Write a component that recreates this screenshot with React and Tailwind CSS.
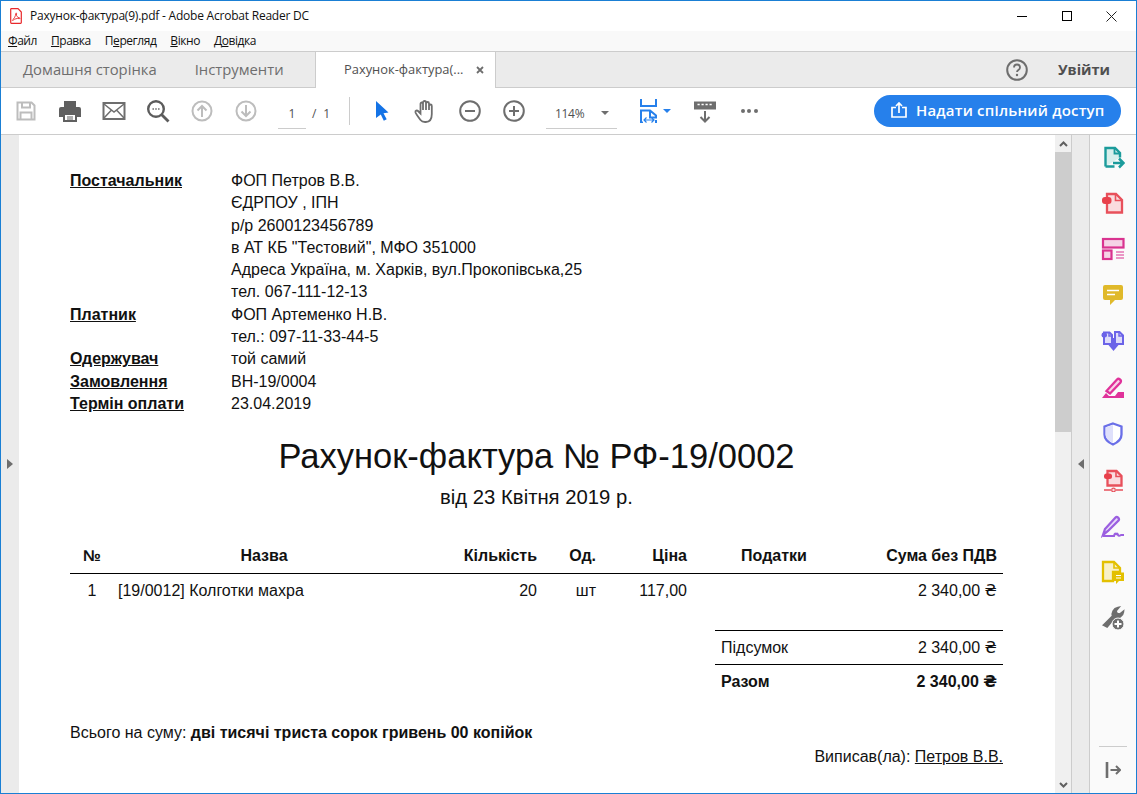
import React from "react";

const Cell = ({ w = "w-[44px]", children }) => (
  <div className={`${w} h-[24px] flex items-center justify-center shrink-0`}>{children}</div>
);

const Svg = ({ s = 24, children, cls = "" }) => (
  <svg width={s} height={s} viewBox="0 0 24 24" fill="none" className={cls}>{children}</svg>
);

const PdfIcon = () => (
  <svg width="12" height="16" viewBox="0 0 12 16" fill="none">
    <path d="M1 .7h7l3.3 3.300v10.600a.7.7 0 0 1-.7.7H1.400a.7.7 0 0 1-.7-.7V1.400A.7.7 0 0 1 1 .7z" fill="#fff" stroke="#e8282b" strokeWidth="1.200" />
    <path d="M2.600 11.800c1.600-1 3-3.800 3.200-6.300.2-1 .9-.6.7.3-.5 2 .9 3.800 3 4 .9.2.6 1-.3.8-2.300-.3-4.300.1-6 1.600-.7.500-1.200.100-.6-.4z" stroke="#e8282b" strokeWidth=".9" />
  </svg>
);

const Toolbar = () => (
  <div className="h-[47px] flex items-center bg-white border-b border-[#cccccc] pl-[3px] shrink-0">
    <Cell>
      <Svg>
        <path d="M3.500 3.500h14l3 3v14h-17z" stroke="#bdbdbd" strokeWidth="2" />
        <path d="M8 3.500v5h8v-5M6.500 20.500v-7h11v7" stroke="#bdbdbd" strokeWidth="2" />
      </Svg>
    </Cell>
    <Cell>
      <Svg>
        <path d="M6 2h12v6H6z" fill="#606060" />
        <path d="M1 10a2 2 0 0 1 2-2h18a2 2 0 0 1 2 2v8h-4v-4H5v4H1z" fill="#606060" />
        <path d="M6 15h12v7H6z" fill="#fff" stroke="#606060" strokeWidth="2" />
        <path d="M9 18h6M9 20h6" stroke="#606060" strokeWidth="1" />
      </Svg>
    </Cell>
    <Cell>
      <Svg>
        <rect x="1.500" y="4" width="21" height="16" stroke="#6e6e6e" strokeWidth="2" />
        <path d="M2 5l10 8 10-8M2 19l7.500-8M22 19l-7.500-8" stroke="#6e6e6e" strokeWidth="1.500" />
      </Svg>
    </Cell>
    <Cell>
      <Svg>
        <circle cx="10" cy="10" r="7.800" stroke="#5c5c5c" strokeWidth="2.400" />
        <path d="M15.500 15.500l7 7" stroke="#5c5c5c" strokeWidth="2.800" />
        <path d="M6.500 10h1.400M9.300 10h1.400M12.100 10h1.400" stroke="#5c5c5c" strokeWidth="1.600" />
      </Svg>
    </Cell>
    <Cell>
      <Svg>
        <circle cx="12" cy="12" r="9.500" stroke="#bdbdbd" strokeWidth="2" />
        <path d="M12 18V7M7.500 11.500L12 7l4.500 4.500" stroke="#bdbdbd" strokeWidth="2" />
      </Svg>
    </Cell>
    <Cell>
      <Svg>
        <circle cx="12" cy="12" r="9.500" stroke="#bdbdbd" strokeWidth="2" />
        <path d="M12 6v11M7.500 12.500L12 17l4.500-4.500" stroke="#bdbdbd" strokeWidth="2" />
      </Svg>
    </Cell>
    <div className="ml-[10px] w-[28px] h-[28px] flex items-center justify-center border-b border-[#cccccc] mt-[8px] text-[12px] text-[#505050] pb-[2px]">1</div>
    <div className="ml-[6px] w-[18px] mt-[6px] text-[12px] text-[#505050] whitespace-nowrap flex justify-between"><span>/</span><span>1</span></div>
    <div className="ml-[19px] mr-[10px] w-px h-[28px] bg-[#cccccc]" />
    <Cell>
      <svg width="14" height="20" viewBox="0 0 14 20"><path d="M1 0l12.500 11.500-5 .8 3.200 6-2.900 1.500-3-6.300L1 17z" fill="#1473e6" /></svg>
    </Cell>
    <Cell>
      <Svg>
        <path d="M6.500 21c-1.500-2-4.500-6-5-7.500-.5-2 1.500-2.500 2.500-1.500l2.500 2.500V5c0-2 2.500-2 2.500 0v6V3.500c0-2 3-2 3 0V11 4.500c0-2 3-2 3 0V11 7c0-2 2.800-2 2.800 0v8c0 4.500-2 8-6 8H11c-2 0-3.500-.7-4.500-2z" stroke="#6e6e6e" strokeWidth="1.800" />
      </Svg>
    </Cell>
    <Cell>
      <Svg>
        <circle cx="12" cy="12" r="9.800" stroke="#6e6e6e" strokeWidth="2" />
        <path d="M7 12h10" stroke="#6e6e6e" strokeWidth="2" />
      </Svg>
    </Cell>
    <Cell>
      <Svg>
        <circle cx="12" cy="12" r="9.800" stroke="#6e6e6e" strokeWidth="2" />
        <path d="M7 12h10M12 7v10" stroke="#6e6e6e" strokeWidth="2" />
      </Svg>
    </Cell>
    <div className="ml-[10px] w-[71px] h-[28px] mt-[8px] border-b border-[#cccccc] flex items-center pl-[9px] pb-[2px] text-[12px] tracking-[-0.300px] text-[#505050] relative">
      114%
      <span className="absolute right-[8px] top-[10px] w-0 h-0 border-l-[4px] border-r-[4px] border-t-[4px] border-l-transparent border-r-transparent border-t-[#6e6e6e]" />
    </div>
    <div className="ml-[23px] w-[18px] h-[24px] shrink-0">
      <svg width="18" height="24" viewBox="0 0 18 24" fill="none">
        <path d="M1 0v7h15V0" stroke="#2680eb" strokeWidth="2" />
        <path d="M1 24V11.500h9l6 5v2h-6v-6M16 21v3M1 23.500h2" stroke="#2680eb" strokeWidth="2" />
        <path d="M4 21h10M6.500 18.500L4 21l2.500 2.500M11.500 18.500L14 21l-2.500 2.500" stroke="#2680eb" strokeWidth="1.200" />
      </svg>
    </div>
    <span className="ml-[5px] w-0 h-0 border-l-[4px] border-r-[4px] border-t-[4px] border-l-transparent border-r-transparent border-t-[#2680eb]" />
    <Cell w="w-[56px] ml-[6px]">
      <Svg>
        <path d="M1 2.500h22v8H1z" fill="#6e6e6e" />
        <path d="M4.500 5.500h2.200M8.500 5.500h2.200M12.500 5.500h2.200M16.500 5.500h2.200" stroke="#fff" strokeWidth="1.400" />
        <path d="M12 12v10.500M7.500 18L12 22.500l4.500-4.500" stroke="#6e6e6e" strokeWidth="2" />
      </Svg>
    </Cell>
    <div className="w-[32px] flex justify-center gap-[2.500px]">
      <span className="w-[4px] h-[4px] rounded-full bg-[#6e6e6e]" />
      <span className="w-[4px] h-[4px] rounded-full bg-[#6e6e6e]" />
      <span className="w-[4px] h-[4px] rounded-full bg-[#6e6e6e]" />
    </div>
    <button className="ml-auto mr-[15px] w-[247px] h-[32px] rounded-full bg-[#2680eb] text-white flex items-center pl-[17px] pb-[2px] text-[15px] font-semibold tracking-[0.2px] whitespace-nowrap">
      <svg width="16" height="16" viewBox="0 0 16 16" fill="none" className="mr-[9px] shrink-0">
        <path d="M5 5.500H1v9.500h14V5.500h-4" stroke="#fff" strokeWidth="1.700" />
        <path d="M8 11V1.500M5 4l3-3 3 3" stroke="#fff" strokeWidth="1.700" />
      </svg>
      Надати спільний доступ
    </button>
  </div>
);

const Tool = ({ children }) => (
  <div className="h-[46.100px] flex items-center justify-center shrink-0"><Svg>{children}</Svg></div>
);

const ToolRail = () => (
  <div className="w-[46px] bg-[#fafafa] flex flex-col items-center shrink-0">
    <div className="flex flex-col -mt-px">
      <Tool>
        <path d="M4.500 21.500V3h9.500l5 5v4.500M4.500 21.500h9" fill="#d8efec" stroke="#1b9b9b" strokeWidth="2.400" />
        <path d="M13.500 3v5.500h5.500" stroke="#1b9b9b" strokeWidth="1.800" />
        <path d="M12 18h10M18 13.500l4.500 4.500-4.500 4.500" stroke="#1b9b9b" strokeWidth="2.500" />
      </Tool>
      <Tool>
        <path d="M6 21.500V3h9l6 6v12.500z" fill="#fadcdf" stroke="#e8505b" strokeWidth="2.300" />
        <path d="M14.500 3v6.500H21" stroke="#e8505b" strokeWidth="1.600" />
        <rect x="1" y="6" width="9.500" height="7" rx="3" fill="#e8404b" />
      </Tool>
      <Tool>
        <rect x="2" y="2" width="20.500" height="8.500" fill="#f5d3e6" stroke="#d9338f" strokeWidth="2.200" />
        <rect x="2" y="13.500" width="8.500" height="8.500" fill="#f5d3e6" stroke="#d9338f" strokeWidth="2.200" />
        <path d="M15 15h8M15 18h8M15 21h8" stroke="#d9338f" strokeWidth="1.100" />
      </Tool>
      <Tool>
        <path d="M4 2h16a2 2 0 0 1 2 2v11a2 2 0 0 1-2 2h-6l-5 5v-5H4a2 2 0 0 1-2-2V4a2 2 0 0 1 2-2z" fill="#e0b92a" />
        <path d="M6 7.500h12M6 11.500h8" stroke="#fff" strokeWidth="1.500" />
      </Tool>
      <Tool>
        <path d="M3 15V3.500h5.500L11 6v9zM14 15V3h4.500L22 6.500V15z" fill="#dedcfa" stroke="#6b63e8" strokeWidth="2" />
        <path d="M8 3.500V7h3M18 3v4h4" stroke="#6b63e8" strokeWidth="1.400" />
        <rect x="0.500" y="3.500" width="5.500" height="5" rx="2.300" fill="#6b63e8" />
        <path d="M12.500 9v9" stroke="#6b63e8" strokeWidth="2.400" />
        <path d="M7.500 16h10l-5 6z" fill="#6b63e8" />
      </Tool>
      <Tool>
        <path d="M5.500 15L16 3.500c1.800-1.800 5 .8 3.500 3L9 17.500z" fill="#f9d3e8" stroke="#e0329a" strokeWidth="2.300" />
        <path d="M1 22l4-5 3 3h6l3-4h6v6z" fill="#e0329a" />
      </Tool>
      <Tool>
        <path d="M12 1.500l8.500 3v8c0 4.500-4 8-8.500 10-4.500-2-8.500-5.500-8.500-10v-8z" fill="#fff" stroke="#6a6fe8" strokeWidth="2.300" />
        <path d="M12 3v18c-4-1.800-7.500-4.800-7.500-8.500v-7z" fill="#dfe0fb" />
      </Tool>
      <Tool>
        <path d="M6.500 17.500V3h9l5 5v9.500z" fill="#fadcdf" stroke="#e8505b" strokeWidth="2.300" />
        <path d="M15 3v5.500h5.500" stroke="#e8505b" strokeWidth="1.600" />
        <rect x="3" y="5.500" width="8" height="5.500" rx="2.500" fill="#e8404b" />
        <path d="M3 22h7M15 22h7" stroke="#e8505b" strokeWidth="1.500" />
        <circle cx="12.500" cy="22" r="1.800" fill="#fadcdf" stroke="#e8505b" strokeWidth="1.200" />
      </Tool>
      <Tool>
        <path d="M2 21l2-6L14.500 3.500c1.500-1.500 4.500 1 3 3L7 17z" fill="#e8dcf9" stroke="#9b5fe0" strokeWidth="2.300" />
        <path d="M2 22h11c.5-3 1.500-3 2-1 .5-2 1.500-2 2 0 .5 1 1.500 1 3 0h3" stroke="#9b5fe0" strokeWidth="2" />
      </Tool>
      <Tool>
        <path d="M2 21V2h11l6 6v4H12v9z" fill="#f8f1c8" stroke="#e3c000" strokeWidth="2.300" />
        <path d="M13 2v6h6" stroke="#e3c000" strokeWidth="1.600" />
        <path d="M12 12.500h11V21h-5l-3 3v-3h-3z" fill="#e3c000" />
        <path d="M15 15.500h5M15 18h5" stroke="#fff" strokeWidth="1.100" />
      </Tool>
      <Tool>
        <path d="M3 19L12 10c-1-3 .5-7 5-8l-2.500 3 1.500 3 3 .5 3-2.500c-.5 4-4.500 6.500-8 5l-8 9.500z" stroke="#6e6e6e" strokeWidth="2.400" fill="#6e6e6e" />
        <circle cx="17" cy="18" r="6" fill="#6e6e6e" stroke="#fafafa" strokeWidth="1" />
        <path d="M13.500 18h7M17 14.500v7" stroke="#fff" strokeWidth="2" />
      </Tool>
    </div>
    <div className="mt-auto w-[28px] h-px bg-[#cccccc]" />
    <div className="h-[46px] flex items-center justify-center shrink-0">
      <svg width="16" height="16" viewBox="0 0 16 16" fill="none">
        <path d="M2 0.500v15" stroke="#6e6e6e" strokeWidth="2.600" strokeLinecap="round" />
        <path d="M5.500 8h9M11 4l4 4-4 4" stroke="#6e6e6e" strokeWidth="2" />
      </svg>
    </div>
  </div>
);

const InfoRow = ({ label, children }) => (
  <div className="grid grid-cols-[161px_1fr] h-[22.300px] leading-[22.300px]">
    <div className="font-bold underline">{label}</div>
    <div>{children}</div>
  </div>
);

const Uah = () => <span className="font-['DejaVu_Sans',sans-serif]">₴</span>;

const Doc = () => (
  <div className="flex-1 bg-white overflow-hidden pl-[51px] pr-[52px] pt-[35px] font-['Liberation_Sans',Arial,sans-serif] text-[16px] text-[#111111]">
    <InfoRow label="Постачальник">ФОП Петров В.В.</InfoRow>
    <InfoRow>ЄДРПОУ , ІПН</InfoRow>
    <InfoRow>р/р 2600123456789</InfoRow>
    <InfoRow>в АТ КБ "Тестовий", МФО 351000</InfoRow>
    <InfoRow>Адреса Україна, м. Харків, вул.Прокопівська,25</InfoRow>
    <InfoRow>тел. 067-111-12-13</InfoRow>
    <InfoRow label="Платник">ФОП Артеменко Н.В.</InfoRow>
    <InfoRow>тел.: 097-11-33-44-5</InfoRow>
    <InfoRow label="Одержувач">той самий</InfoRow>
    <InfoRow label="Замовлення">ВН-19/0004</InfoRow>
    <InfoRow label="Термін оплати">23.04.2019</InfoRow>
    <div className="mt-[21px] text-center text-[34.500px] leading-[40px]">Рахунок-фактура № РФ-19/0002</div>
    <div className="mt-[9px] text-center text-[20.300px] leading-[24px]">від 23 Квітня 2019 р.</div>
    <div className="mt-[35px] grid grid-cols-[44px_300px_129px_59px_91px_162px_148px] font-bold border-b border-black h-[30px] leading-[24px]">
      <div className="text-center">№</div>
      <div className="text-center">Назва</div>
      <div className="text-right pr-[6px]">Кількість</div>
      <div className="text-right pr-[6px]">Од.</div>
      <div className="text-right pr-[6px]">Ціна</div>
      <div className="text-center">Податки</div>
      <div className="text-right pr-[6px]">Сума без ПДВ</div>
    </div>
    <div className="grid grid-cols-[44px_300px_129px_59px_91px_162px_148px] mt-[5px] leading-[24px]">
      <div className="text-center">1</div>
      <div className="pl-[4px]">[19/0012] Колготки махра</div>
      <div className="text-right pr-[6px]">20</div>
      <div className="text-right pr-[6px]">шт</div>
      <div className="text-right pr-[6px]">117,00</div>
      <div />
      <div className="text-right pr-[6px]">2 340,00 <Uah /></div>
    </div>
    <div className="ml-auto mt-[27px] w-[288px] border-t border-black">
      <div className="h-[34px] flex items-center justify-between px-[6px] border-b border-black">
        <span>Підсумок</span><span>2 340,00 <Uah /></span>
      </div>
      <div className="h-[33px] flex items-center justify-between px-[6px] font-bold">
        <span>Разом</span><span>2 340,00 <Uah /></span>
      </div>
    </div>
    <div className="mt-[24px] leading-[22px]">Всього на суму: <b>дві тисячі триста сорок гривень 00 копійок</b></div>
    <div className="mt-[2px] text-right leading-[22px]">Виписав(ла): <span className="underline">Петров В.В.</span></div>
  </div>
);

const Scrollbar = () => (
  <div className="w-[16px] bg-[#f0f0f0] flex flex-col shrink-0">
    <div className="h-[17px] flex items-center justify-center shrink-0">
      <svg width="9" height="6" viewBox="0 0 9 6" fill="none"><path d="M1 5l3.500-3.500L8 5" stroke="#606060" strokeWidth="2" /></svg>
    </div>
    <div className="h-[280px] bg-[#cdcdcd]" />
    <div className="mt-auto h-[17px] flex items-center justify-center">
      <svg width="9" height="6" viewBox="0 0 9 6" fill="none"><path d="M1 1l3.500 3.500L8 1" stroke="#606060" strokeWidth="2" /></svg>
    </div>
  </div>
);

export default function App() {
  return (
    <div className="w-[1137px] h-[794px] overflow-hidden border border-[#1a7fd4] bg-white flex flex-col font-['Open_Sans','Noto_Sans',sans-serif]">
      <div className="h-[30px] flex items-center bg-white pl-[9px] shrink-0">
        <PdfIcon />
        <span className="ml-[8px] text-[12px] text-[#111111] whitespace-nowrap tracking-[-0.220px]">Рахунок-фактура(9).pdf - Adobe Acrobat Reader DC</span>
        <div className="ml-auto flex items-center h-full pr-[2px]">
          <div className="w-[45px] flex justify-center"><div className="w-[10px] h-px bg-black" /></div>
          <div className="w-[45px] flex justify-center"><div className="w-[10px] h-[10px] border border-black" /></div>
          <div className="w-[45px] flex justify-center">
            <svg width="11" height="11" viewBox="0 0 11 11" fill="none"><path d="M.5.500l10 10M10.500.500l-10 10" stroke="#222" strokeWidth="1" /></svg>
          </div>
        </div>
      </div>
      <div className="h-[21px] flex items-center bg-[#f9f9f9] border-b border-[#cccccc] text-[12px] text-[#111111] pl-[7px] gap-[14px] shrink-0 tracking-[-0.450px]">
        <span><u>Ф</u>айл</span>
        <span><u>П</u>равка</span>
        <span>П<u>е</u>регляд</span>
        <span><u>В</u>ікно</span>
        <span>Д<u>о</u>відка</span>
      </div>
      <div className="h-[36px] flex bg-[#ebebeb] shrink-0 relative">
        <div className="flex-1 flex items-center border-b border-[#cccccc] text-[14.800px] text-[#6e6e6e]">
          <span className="ml-[22px]">Домашня сторінка</span>
          <span className="ml-[38px]">Інструменти</span>
        </div>
        <div className="w-[181px] bg-white border-x border-[#cccccc] flex items-center pl-[28px] text-[12.900px] text-[#505050] whitespace-nowrap">
          Рахунок-фактура(...
          <svg width="8" height="8" viewBox="0 0 8 8" fill="none" className="ml-[13px]"><path d="M1 1l6 6M7 1L1 7" stroke="#6e6e6e" strokeWidth="1.800" /></svg>
        </div>
        <div className="w-[640px] flex items-center justify-end border-b border-[#cccccc]">
          <svg width="22" height="22" viewBox="0 0 22 22" fill="none" className="mr-[30px]">
            <circle cx="11" cy="11" r="9.800" stroke="#6e6e6e" strokeWidth="2" />
            <path d="M8 8.500c0-4 6-4 6 0 0 2.500-3 2.500-3 4.500" stroke="#6e6e6e" strokeWidth="1.800" />
            <circle cx="11" cy="16" r="1.200" fill="#6e6e6e" />
          </svg>
          <span className="mr-[26px] text-[14.500px] font-bold text-[#505050]">Увійти</span>
        </div>
      </div>
      <Toolbar />
      <div className="flex-1 flex min-h-0">
        <div className="w-[18px] bg-[#ebebeb] flex items-center justify-center shrink-0">
          <span className="w-0 h-0 border-y-[5.500px] border-l-[6px] border-y-transparent border-l-[#6e6e6e]" />
        </div>
        <Doc />
        <Scrollbar />
        <div className="w-[19px] bg-[#ebebeb] border-x border-[#cccccc] flex items-center justify-center shrink-0">
          <span className="w-0 h-0 border-y-[5.500px] border-r-[6px] border-y-transparent border-r-[#6e6e6e]" />
        </div>
        <ToolRail />
      </div>
    </div>
  );
}
